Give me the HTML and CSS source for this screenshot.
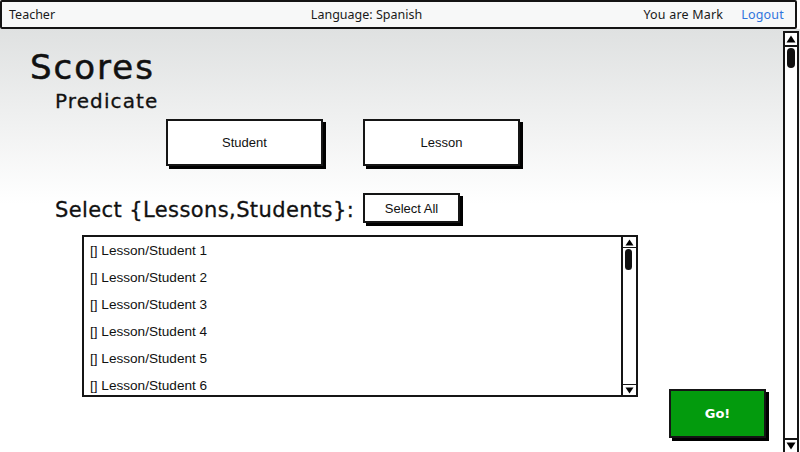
FILE: index.html
```html
<!DOCTYPE html>
<html>
<head>
<meta charset="utf-8">
<link rel="stylesheet" href="styles.css">
</head>
<body>
<div class="topbar">
  <div class="tb-left">Teacher</div>
  <div class="tb-center">Language: Spanish</div>
  <div class="tb-right"><span>You are Mark</span><a class="logout">Logout</a></div>
</div>
<div class="main">
  <div class="content">
    <h1 class="title">Scores</h1>
    <h2 class="sub">Predicate</h2>
    <div class="btnrow">
      <div class="btn big">Student</div>
      <div class="btn big">Lesson</div>
    </div>
    <div class="selrow">
      <div class="sellabel">Select {Lessons,Students}:</div>
      <div class="btn small">Select All</div>
    </div>
    <div class="listrow">
      <div class="listbox">
        <div class="items">
          <div class="item">[] Lesson/Student 1</div>
          <div class="item">[] Lesson/Student 2</div>
          <div class="item">[] Lesson/Student 3</div>
          <div class="item">[] Lesson/Student 4</div>
          <div class="item">[] Lesson/Student 5</div>
          <div class="item">[] Lesson/Student 6</div>
        </div>
        <div class="lscroll">
          <div class="arrow up"><svg width="9" height="7" viewBox="0 0 9 7"><polygon points="4.5,0.5 8.5,6.5 0.5,6.5" fill="#000"/></svg></div>
          <div class="thumb lthumb"></div>
          <div class="track"></div>
          <div class="arrow down"><svg width="9" height="7" viewBox="0 0 9 7"><polygon points="0.5,0.5 8.5,0.5 4.5,6.5" fill="#000"/></svg></div>
        </div>
      </div>
      <div class="go">Go!</div>
    </div>
  </div>
  <div class="vscroll">
    <div class="arrow up"><svg width="10" height="8" viewBox="0 0 10 8"><polygon points="5,0.5 9.5,7.5 0.5,7.5" fill="#000"/></svg></div>
    <div class="thumb vthumb"></div>
    <div class="track"></div>
    <div class="arrow down"><svg width="10" height="8" viewBox="0 0 10 8"><polygon points="0.5,0.5 9.5,0.5 5,7.5" fill="#000"/></svg></div>
  </div>
</div>
</body>
</html>
```
FILE: styles.css
```css
html, body {
  margin: 0;
  padding: 0;
}
body {
  width: 800px;
  height: 452px;
  overflow: hidden;
  background: #fff;
  font-family: "DejaVu Sans", sans-serif;
  color: #111;
}
.topbar {
  box-sizing: border-box;
  width: 797px;
  height: 29px;
  border: 2px solid #141414;
  border-radius: 2px;
  background: #f7f8f8;
  display: grid;
  grid-template-columns: 1fr auto 1fr;
  align-items: center;
  font-family: "Noto Sans", sans-serif;
  font-size: 12.5px;
  color: #1a1a1a;
  padding: 0 11px 1px 7px;
}
.tb-center {
  padding-right: 60px;
}
.tb-right {
  justify-self: end;
  display: flex;
  gap: 18px;
}
.tb-right span {
  letter-spacing: 0.2px;
}
.logout {
  color: #2f74dd;
  letter-spacing: 0.2px;
}
.main {
  display: flex;
  height: 423px;
  background: linear-gradient(#dfe1e1 0px, #ffffff 175px);
}
.content {
  flex: 1;
  padding-left: 30px;
}
.title {
  margin: 20px 0 0 0;
  font-size: 34px;
  line-height: 36px;
  font-weight: normal;
  letter-spacing: 2px;
  -webkit-text-stroke: 0.5px #111;
}
.sub {
  margin: 4px 0 0 25px;
  font-size: 20px;
  line-height: 24px;
  font-weight: normal;
  letter-spacing: 1.1px;
  -webkit-text-stroke: 0.3px #111;
}
.btn {
  box-sizing: border-box;
  background: #fff;
  border: 2px solid #151515;
  box-shadow: 3px 3px 0 #000;
  display: flex;
  align-items: center;
  justify-content: center;
  font-family: "Liberation Sans", Arial, sans-serif;
  font-size: 13px;
  color: #111;
}
.btnrow {
  display: flex;
  gap: 40px;
  margin: 6px 0 0 136px;
}
.big {
  width: 157px;
  height: 47px;
}
.selrow {
  display: flex;
  align-items: center;
  margin: 27px 0 0 25px;
}
.sellabel {
  width: 308px;
  font-size: 21px;
  line-height: 26px;
  letter-spacing: 0.4px;
  padding-top: 3px;
  -webkit-text-stroke: 0.3px #111;
}
.small {
  width: 97px;
  height: 30px;
}
.listrow {
  display: flex;
  align-items: flex-start;
  gap: 31px;
  margin: 12px 0 0 52px;
}
.listbox {
  box-sizing: border-box;
  width: 556px;
  height: 162px;
  border: 2px solid #151515;
  background: #fff;
  display: flex;
}
.items {
  flex: 1;
  padding: 2px 0 0 6px;
  font-family: "Liberation Sans", Arial, sans-serif;
  font-size: 13.6px;
  color: #111;
  overflow: hidden;
}
.item {
  height: 27px;
  line-height: 24px;
}
.lscroll, .vscroll {
  box-sizing: border-box;
  display: flex;
  flex-direction: column;
  border-left: 2px solid #151515;
  background: #fff;
}
.lscroll {
  width: 15px;
}
.arrow {
  display: flex;
  align-items: center;
  justify-content: center;
  flex: none;
}
.lscroll .arrow {
  height: 10px;
}
.lscroll .arrow.up {
  border-bottom: 1.5px solid #151515;
}
.lscroll .arrow.down {
  border-top: 1.5px solid #151515;
}
.thumb {
  background: #111;
  border-radius: 4px;
  flex: none;
}
.lthumb {
  width: 7px;
  height: 21px;
  margin: 1px 0 0 2px;
}
.track {
  flex: 1;
}
.go {
  box-sizing: border-box;
  width: 97px;
  height: 49px;
  margin-top: 154px;
  background: #039b0d;
  border: 2px solid #151515;
  box-shadow: 3px 3px 0 #000;
  color: #fff;
  font-family: "DejaVu Sans", sans-serif;
  font-weight: bold;
  font-size: 13px;
  display: flex;
  align-items: center;
  justify-content: center;
}
.vscroll {
  width: 16px;
  margin: 2px 1px 0 0;
  border: 2px solid #151515;
  border-bottom: none;
}
.vscroll .arrow {
  height: 12px;
}
.vscroll .arrow.up {
  border-bottom: 2px solid #151515;
}
.vscroll .arrow.down {
  border-top: 2px solid #151515;
}
.vthumb {
  width: 8px;
  height: 20px;
  margin: 1px 0 0 2px;
}
```
